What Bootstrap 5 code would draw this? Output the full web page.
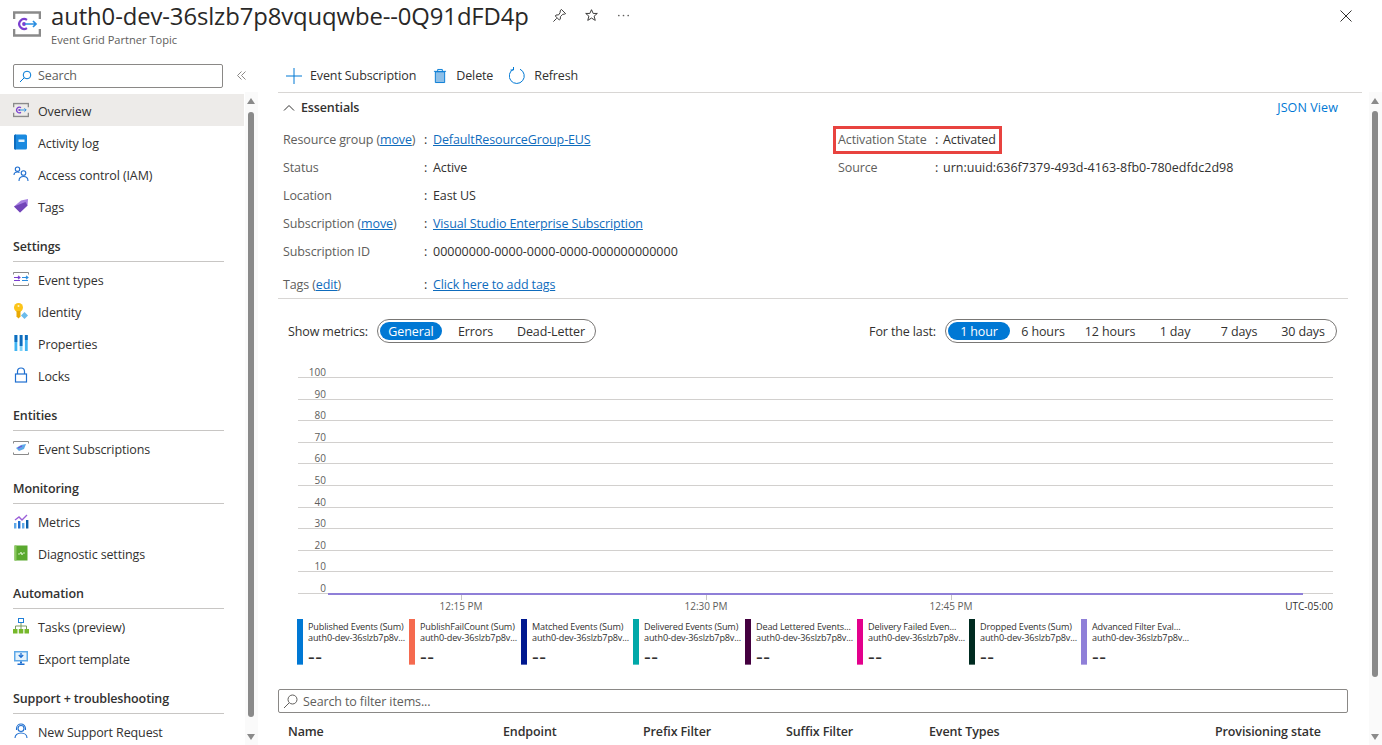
<!DOCTYPE html>
<html lang="en">
<head>
  <meta charset="UTF-8" />
  <meta name="viewport" content="width=device-width, initial-scale=1.0"/>
  <title>Event Grid Partner Topic</title>
  <link href="https://cdn.jsdelivr.net/npm/bootstrap@5.3.2/dist/css/bootstrap.min.css" rel="stylesheet" />
  <style>
    html, body { height: 745px; overflow: hidden; }
    body {
      background: #fff;
      color: #323130;
      font-family: "Open Sans", "Noto Sans", sans-serif;
      font-size: 12.5px;
      letter-spacing: -.12px;
      line-height: 16px;
    }
    a { color: #0f6cbd; }
    .page-head { height: 64px; padding: 0 0 0 13px; }
    .head-icon { width: 28px; height: 26px; margin-top: 11px; margin-right: 10px; }
    .page-title { font-size: 23.85px; line-height: 30px; margin: 0; padding-top: 1px; font-weight: 400; letter-spacing: -.1px; color: #292827; }
    .page-sub { font-size: 11.1px; line-height: 14px; color: #605e5c; margin-top: 2px; letter-spacing: 0; }
    .head-tools { gap: 17px; margin-left: 23px; margin-top: 8px; }
    .head-close { position: absolute; top: 9px; right: 29px; }
    .side-col { width: 260px; height: 681px; position: relative; flex: none; }
    .side-search { width: 210px; height: 24px; margin-left: 13px; border: 1px solid #8a8886; border-radius: 2px; padding-left: 5px; color: #605e5c; gap: 6px; }
    .collapse-mark { position: absolute; left: 236px; top: 6px; }
    .side-list { margin-top: 6px; width: 244px; }
    .side-row { height: 32px; padding-left: 13px; gap: 10px; color: #323130; padding-top: 4px; }
    .side-row.is-active { background: #edebe9; }
    .side-row svg { width: 16px; height: 16px; flex: none; margin-right: -1px; margin-top: -4px; }
    .side-head { height: 40px; margin: 0 20px 1px 13px; border-bottom: 1px solid #c8c6c4; font-weight: 600; padding-top: 17px; line-height: 16px; color: #323130; }
    .bar-track { position: absolute; width: 6px; }
    .side-bar { left: 248px; top: 0; height: 681px; }
    .page-bar { left: 1112px; top: 0; height: 681px; }
    .bar-track::before { content: ""; position: absolute; top: 28px; bottom: 0; left: -3px; right: -4px; background: #fafafa; }
    .bar-thumb { position: absolute; left: 0; right: 0; background: #8a8a8a; border-radius: 3px; }
    .bar-up, .bar-down { position: absolute; left: -1px; width: 0; height: 0; border-left: 4px solid transparent; border-right: 4px solid transparent; }
    .bar-up { border-bottom: 6px solid #8a8a8a; }
    .bar-down { border-top: 6px solid #8a8a8a; }
    .main-col { width: 1122px; flex: none; padding-left: 18px; position: relative; }
    .tool-strip { height: 29px; width: 1084px; border-bottom: 1px solid #d8d6d4; padding: 0 0 5px 8px; }
    .tool-btn { color: #323130; flex: none; }
    .tool-add { gap: 8px; margin-right: 17px; }
    .tool-del { gap: 9px; margin-right: 16px; }
    .tool-ref { gap: 8px; }
    .ess-head { height: 30px; width: 1060px; padding-left: 5px; gap: 6px; font-weight: 600; }
    .ess-head a { font-weight: 400; text-decoration: none; color: #0078d4; letter-spacing: .1px; }
    .ess-grid { width: 1070px; height: 176px; border-bottom: 1px solid #d8d6d4; padding: 3px 0 0 5px; }
    .ess-left { width: 555px; }
    .ess-row { height: 28px; }
    .ess-row.tags-row { margin-top: 5px; }
    .ess-key { width: 141px; color: #605e5c; flex: none; }
    .ess-key.short-key { width: 97px; }
    .ess-colon { width: 9px; flex: none; color: #323130; }
    .ess-colon.short-colon { width: 8px; }
    .id-text { letter-spacing: 0; }
    .state-box { outline: 3px solid #e8433f; height: 22px; margin: 3px 0 3px -2px; padding-left: 2px; width: 163px; }
    .metric-bar { height: 24px; margin: 20px 0 0 10px; width: 1049px; justify-content: space-between; }
    .metric-label { padding-top: 2px; }
    .pill-wrap { height: 24px; border: 1px solid #797775; border-radius: 12px; padding: 2px; margin-left: 9px; color: #323130; }
    .pill-wrap span { display: block; height: 18px; line-height: 20px; border-radius: 9px; text-align: center; flex: none; }
    .pill-wrap .is-on { background: #0078d4; color: #fff; }
    .chart-area { margin-top: 23px; width: 1035px; margin-left: 20px; position: relative; height: 252px; }
    .grid-row { height: 21.6px; border-bottom: 1px solid #d2d0ce; position: relative; }
    .grid-row:first-child { height: 12px; }
    .grid-num { display: block; width: 28px; text-align: right; font-size: 10px; line-height: 10px; position: absolute; bottom: 0; color: #605e5c; letter-spacing: 0; }
    .flat-line { position: absolute; left: 30px; top: 227px; width: 975px; height: 2px; background: #8f7fd8; }
    .tick-mark { position: absolute; top: 229px; width: 1px; height: 5px; background: #c8c6c4; }
    .tick-label { position: absolute; top: 234px; font-size: 10px; line-height: 12px; color: #605e5c; transform: translateX(-50%); letter-spacing: 0; white-space: nowrap; }
    .zone-label { position: absolute; top: 234px; right: 0; font-size: 10px; line-height: 12px; color: #323130; letter-spacing: 0; }
    .legend-strip { margin: 1px 0 0 19px; height: 46px; }
    .legend-cell { width: 112px; flex: none; display: flex; }
    .legend-swatch { width: 6px; height: 46px; flex: none; border-bottom: 1px solid rgba(255,255,255,.35); }
    .legend-text { width: 105px; padding-left: 5px; font-size: 9.1px; line-height: 11px; letter-spacing: -.14px; padding-top: 2px; color: #323130; white-space: nowrap; }
    .legend-value { font-size: 21px; line-height: 16px; margin-top: 5px; color: #323130; letter-spacing: .6px; }
    .filter-box { width: 1070px; height: 24px; margin-top: 24px; border: 1px solid #8a8886; border-radius: 2px; padding-left: 4px; gap: 5px; color: #605e5c; }
    .filter-box span { padding-top: 2px; }
    .col-heads { position: relative; height: 30px; margin-top: 2px; }
    .col-heads span { position: absolute; top: 9px; font-weight: 600; color: #323130; white-space: nowrap; }
    .col-a { left: 10px; } .col-b { left: 225px; } .col-c { left: 365px; } .col-d { left: 508px; } .col-e { left: 651px; } .col-f { left: 937px; }
  </style>
</head>
<body>
<svg width="0" height="0" class="d-block position-absolute">
  <defs>
    <symbol id="grid-topic" viewBox="0 0 28 26">
      <path d="M1 8V1.500h26V8M1 18v6.500h26V18" fill="none" stroke="#8a8a8a" stroke-width="2.600"/>
      <path d="M14 8.800a5 5 0 1 0 0 8.400" fill="none" stroke="#7b3fd0" stroke-width="2.200"/>
      <circle cx="11" cy="13" r="1.900" fill="#7b3fd0"/>
      <path d="M12 13h11M20 10l3 3-3 3" fill="none" stroke="#2a8ee0" stroke-width="1.700"/>
    </symbol>
  </defs>
</svg>

<div class="page-head d-flex position-relative">
  <svg class="head-icon"><use href="#grid-topic"/></svg>
  <div>
    <div class="d-flex">
      <h1 class="page-title">auth0-dev-36slzb7p8vquqwbe--0Q91dFD4p</h1>
      <div class="head-tools d-flex align-items-start">
        <svg width="15" height="15" viewBox="0 0 16 16" fill="none" stroke="#323130"><path d="M10 1.500l4.500 4.500-1 .5-2 .2-2.500 2.500-.2 2.800-1 .8-4.300-4.300.8-1 2.800-.2L8.600 5l.2-2z"/><path d="M5 11l-3.500 3.500"/></svg>
        <svg width="15" height="15" viewBox="0 0 16 16" fill="none" stroke="#323130"><path d="M8 1.800l1.800 4h4.400l-3.400 2.900 1.200 4.500L8 10.700l-4 2.500 1.200-4.500L1.800 5.800h4.400z"/></svg>
        <svg width="15" height="15" viewBox="0 0 16 16" fill="#605e5c"><circle cx="3" cy="8" r=".9"/><circle cx="8" cy="8" r=".9"/><circle cx="13" cy="8" r=".9"/></svg>
      </div>
    </div>
    <div class="page-sub">Event Grid Partner Topic</div>
  </div>
  <svg class="head-close" width="14" height="14" viewBox="0 0 14 14" stroke="#323130" fill="none"><path d="M1.500 1.500l11 11M12.500 1.500l-11 11"/></svg>
</div>

<div class="d-flex">
  <nav class="side-col">
    <div class="side-search d-flex align-items-center">
      <svg width="13" height="13" viewBox="0 0 13 13" fill="none" stroke="#0078d4"><circle cx="8" cy="5" r="3.800"/><path d="M5.200 7.800L1 12"/></svg>
      <span>Search</span>
    </div>
    <svg class="collapse-mark" width="11" height="11" viewBox="0 0 11 11" fill="none" stroke="#8a8886"><path d="M5.500 1.500L1.500 5.500l4 4M9.500 1.500l-4 4 4 4"/></svg>

    <div class="side-list">
      <a class="side-row is-active d-flex align-items-center text-decoration-none"><svg viewBox="0 0 28 26"><use href="#grid-topic"/></svg>Overview</a>
      <a class="side-row d-flex align-items-center text-decoration-none"><svg viewBox="0 0 16 16"><rect x="1" y=".5" width="13" height="15" rx="1.500" fill="#1a8ae0"/><path d="M1 2v12a1.500 1.500 0 0 0 1.500 1.500H3V.5h-.5A1.500 1.500 0 0 0 1 2z" fill="#0f6cbd"/><rect x="5.500" y="5.500" width="6" height="2.500" fill="#e2f2fd"/></svg>Activity log</a>
      <a class="side-row d-flex align-items-center text-decoration-none"><svg viewBox="0 0 16 16" fill="none" stroke="#1f6fd0" stroke-width="1.100"><circle cx="4.500" cy="3.200" r="2.200"/><path d="M1 9c0-2 1.500-3 3.500-3 .8 0 1.500.2 2 .5"/><circle cx="10.500" cy="7" r="2.300"/><path d="M6 15c0-2.800 2-4.500 4.500-4.500S15 12.200 15 15"/></svg>Access control (IAM)</a>
      <a class="side-row d-flex align-items-center text-decoration-none"><svg viewBox="0 0 16 16"><path d="M1 8.500L8 2.500l7-1.500-.5 6.500L7 14.500z" fill="#a67fe0"/><path d="M1 8.500L7 14.500l7.500-7-2-3.500z" fill="#7245b8"/></svg>Tags</a>

      <div class="side-head">Settings</div>
      <a class="side-row d-flex align-items-center text-decoration-none"><svg viewBox="0 0 16 16" fill="none"><path d="M.5 3.500V1.500h15v2M.5 12.500v2h15v-2" stroke="#8a8a8a"/><path d="M1 6.500h6M5 4.800l2 1.700-2 1.700M1 9.500h6" stroke="#7b3fd0" stroke-width="1.100"/><path d="M9 6.500h6M13 4.800l2 1.700-2 1.700M9 9.500h6" stroke="#2a8ee0" stroke-width="1.100"/></svg>Event types</a>
      <a class="side-row d-flex align-items-center text-decoration-none"><svg viewBox="0 0 16 16"><circle cx="5.500" cy="4.500" r="4.500" fill="#fcc419"/><path d="M3.500 8h4v5.500l-2 2-2-2z" fill="#e8a905"/><path d="M11.500 9l3.500 3.500-3.500 3.500L8 12.500z" fill="#6cbcec"/><circle cx="5.500" cy="3" r="1" fill="#fff3bf"/></svg>Identity</a>
      <a class="side-row d-flex align-items-center text-decoration-none"><svg viewBox="0 0 16 16"><rect x="1.500" y="0" width="2.800" height="16" fill="#3fb4f2"/><rect x="6.700" y="0" width="2.800" height="16" fill="#7fd3f7"/><rect x="11.900" y="0" width="2.800" height="16" fill="#3fb4f2"/><rect x="1.500" y="0" width="2.800" height="7" fill="#0f6cbd"/><rect x="6.700" y="0" width="2.800" height="11" fill="#0f6cbd"/><rect x="11.900" y="0" width="2.800" height="5" fill="#0f6cbd"/></svg>Properties</a>
      <a class="side-row d-flex align-items-center text-decoration-none"><svg viewBox="0 0 16 16" fill="none" stroke="#1f6fd0" stroke-width="1.200"><rect x="2.500" y="7" width="11" height="8"/><path d="M4.500 7V4.500a3.500 3.500 0 0 1 7 0V7"/></svg>Locks</a>

      <div class="side-head">Entities</div>
      <a class="side-row d-flex align-items-center text-decoration-none"><svg viewBox="0 0 16 16" fill="none"><path d="M.5 3.500V1.500h15v2M.5 12.500v2h15v-2" stroke="#8a8a8a"/><path d="M3 8l5-3 5-1-2 5-5 2z" fill="#5ea8e8"/><path d="M5 8l4-2" stroke="#7b3fd0"/></svg>Event Subscriptions</a>

      <div class="side-head">Monitoring</div>
      <a class="side-row d-flex align-items-center text-decoration-none"><svg viewBox="0 0 16 16"><rect x="1" y="10" width="2.400" height="5.500" fill="#5ea8e8"/><rect x="5" y="8" width="2.400" height="7.500" fill="#1f6fd0"/><rect x="9" y="10" width="2.400" height="5.500" fill="#5ea8e8"/><rect x="13" y="7" width="2.400" height="8.500" fill="#0a5ea8"/><path d="M2 7l4-3 3 3 5-5" fill="none" stroke="#9a5fd8" stroke-width="1.400"/></svg>Metrics</a>
      <a class="side-row d-flex align-items-center text-decoration-none"><svg viewBox="0 0 16 16"><rect x="1.500" y=".5" width="13" height="15" fill="#5aa92f"/><rect x="1.500" y=".5" width="2" height="15" fill="#8cc860"/><path d="M5 9h2l1-2 1 3 1-2h2" fill="none" stroke="#d8f0c8" stroke-width=".9"/></svg>Diagnostic settings</a>

      <div class="side-head">Automation</div>
      <a class="side-row d-flex align-items-center text-decoration-none"><svg viewBox="0 0 16 16" fill="none"><rect x="5.500" y=".5" width="5" height="4" stroke="#1f7fd8"/><path d="M8 5v6M2.500 11V8h11v3" stroke="#7a9a60"/><rect x="0" y="11" width="4.500" height="4.500" fill="#76b82a"/><rect x="5.800" y="11" width="4.500" height="4.500" fill="#76b82a"/><rect x="11.500" y="11" width="4.500" height="4.500" fill="#76b82a"/></svg>Tasks (preview)</a>
      <a class="side-row d-flex align-items-center text-decoration-none"><svg viewBox="0 0 16 16"><rect x="1" y="1" width="14" height="10.500" fill="#5ea8e8"/><rect x="2.500" y="2.500" width="11" height="7.500" fill="#e6f3fc"/><path d="M8 3v4M5.800 5L8 7.400 10.200 5" fill="none" stroke="#1f6fd0" stroke-width="1.300"/><rect x="7" y="11.500" width="2" height="2" fill="#1f6fd0"/><rect x="4.500" y="13.500" width="7" height="1.500" fill="#1f6fd0"/></svg>Export template</a>

      <div class="side-head">Support + troubleshooting</div>
      <a class="side-row d-flex align-items-center text-decoration-none"><svg viewBox="0 0 16 16" fill="none" stroke="#1f6fd0" stroke-width="1.100"><circle cx="8" cy="5.500" r="3"/><path d="M3.500 7V5.500a4.500 4.500 0 0 1 9 0V7M2 15c0-3 2.500-5 6-5s6 2 6 5"/></svg>New Support Request</a>
    </div>

    <div class="bar-track side-bar">
      <span class="bar-up" style="top:34px"></span>
      <span class="bar-thumb" style="top:48px;height:605px"></span>
      <span class="bar-down" style="top:670px"></span>
    </div>
  </nav>

  <main class="main-col">
    <div class="tool-strip d-flex align-items-center">
      <div class="tool-btn tool-add d-flex align-items-center"><svg width="16" height="16" viewBox="0 0 16 16" stroke="#0078d4" fill="none"><path d="M8 0v16M0 8h16"/></svg>Event Subscription</div>
      <div class="tool-btn tool-del d-flex align-items-center"><svg width="14" height="16" viewBox="0 0 15 16"><path d="M2.500 3.500h10V15h-10z" fill="#8dbfe8" stroke="#0078d4"/><path d="M1 3h13M5 3V1h5v2" fill="none" stroke="#0078d4"/></svg>Delete</div>
      <div class="tool-btn tool-ref d-flex align-items-center"><svg width="17" height="17" viewBox="0 0 17 17" fill="none" stroke="#0078d4"><path d="M11 2.200A7.500 7.500 0 1 1 4.500 2.200"/><path d="M4.500 0v3H1.500"/></svg>Refresh</div>
    </div>

    <div class="ess-head d-flex align-items-center">
      <svg width="12" height="12" viewBox="0 0 12 12" fill="none" stroke="#323130"><path d="M1 8.500l5-5 5 5"/></svg>
      <span>Essentials</span>
      <a class="ms-auto" href="#">JSON View</a>
    </div>

    <div class="ess-grid d-flex">
      <div class="ess-left">
        <div class="ess-row d-flex align-items-center"><span class="ess-key">Resource group (<a href="#">move</a>)</span><span class="ess-colon">:</span><a href="#">DefaultResourceGroup-EUS</a></div>
        <div class="ess-row d-flex align-items-center"><span class="ess-key">Status</span><span class="ess-colon">:</span>Active</div>
        <div class="ess-row d-flex align-items-center"><span class="ess-key">Location</span><span class="ess-colon">:</span>East US</div>
        <div class="ess-row d-flex align-items-center"><span class="ess-key">Subscription (<a href="#">move</a>)</span><span class="ess-colon">:</span><a href="#">Visual Studio Enterprise Subscription</a></div>
        <div class="ess-row d-flex align-items-center"><span class="ess-key">Subscription ID</span><span class="ess-colon">:</span><span class="id-text">00000000-0000-0000-0000-000000000000</span></div>
        <div class="ess-row tags-row d-flex align-items-center"><span class="ess-key">Tags (<a href="#">edit</a>)</span><span class="ess-colon">:</span><a href="#">Click here to add tags</a></div>
      </div>
      <div>
        <div class="state-box d-flex align-items-center"><span class="ess-key short-key">Activation State</span><span class="ess-colon short-colon">:</span>Activated</div>
        <div class="ess-row d-flex align-items-center"><span class="ess-key short-key">Source</span><span class="ess-colon short-colon">:</span><span class="id-text">urn:uuid:636f7379-493d-4163-8fb0-780edfdc2d98</span></div>
      </div>
    </div>

    <div class="metric-bar d-flex">
      <div class="d-flex align-items-center"><span class="metric-label">Show metrics:</span>
        <div class="pill-wrap d-flex align-items-center">
          <span class="is-on" style="width:62px">General</span><span style="width:67px">Errors</span><span style="width:84px">Dead-Letter</span>
        </div>
      </div>
      <div class="d-flex align-items-center"><span class="metric-label">For the last:</span>
        <div class="pill-wrap d-flex align-items-center">
          <span class="is-on" style="width:62px">1 hour</span><span style="width:66px">6 hours</span><span style="width:68px">12 hours</span><span style="width:62px">1 day</span><span style="width:66px">7 days</span><span style="width:62px">30 days</span>
        </div>
      </div>
    </div>

    <div class="chart-area">
      <div class="grid-row"><span class="grid-num">100</span></div>
      <div class="grid-row"><span class="grid-num">90</span></div>
      <div class="grid-row"><span class="grid-num">80</span></div>
      <div class="grid-row"><span class="grid-num">70</span></div>
      <div class="grid-row"><span class="grid-num">60</span></div>
      <div class="grid-row"><span class="grid-num">50</span></div>
      <div class="grid-row"><span class="grid-num">40</span></div>
      <div class="grid-row"><span class="grid-num">30</span></div>
      <div class="grid-row"><span class="grid-num">20</span></div>
      <div class="grid-row"><span class="grid-num">10</span></div>
      <div class="grid-row"><span class="grid-num">0</span></div>
      <span class="flat-line"></span>
      <span class="tick-mark" style="left:163px"></span><span class="tick-label" style="left:163px">12:15 PM</span>
      <span class="tick-mark" style="left:408px"></span><span class="tick-label" style="left:408px">12:30 PM</span>
      <span class="tick-mark" style="left:653px"></span><span class="tick-label" style="left:653px">12:45 PM</span>
      <span class="zone-label">UTC-05:00</span>
    </div>

    <div class="legend-strip d-flex" id="legendStrip"></div>

    <div class="filter-box d-flex align-items-center">
      <svg width="15" height="15" viewBox="0 0 15 15" fill="none" stroke="#605e5c"><circle cx="9.500" cy="5.500" r="4.500"/><path d="M6 9l-5 5"/></svg>
      <span>Search to filter items...</span>
    </div>

    <div class="col-heads">
      <span class="col-a">Name</span><span class="col-b">Endpoint</span><span class="col-c">Prefix Filter</span><span class="col-d">Suffix Filter</span><span class="col-e">Event Types</span><span class="col-f">Provisioning state</span>
    </div>

    <div class="bar-track page-bar">
      <span class="bar-up" style="top:34px"></span>
      <span class="bar-thumb" style="top:47px;height:566px"></span>
      <span class="bar-down" style="top:670px"></span>
    </div>
  </main>
</div>

<script>
  // Legend entries, in chart order
  const legendItems = [
    { name: "Published Events (Sum)", color: "#0078d4" },
    { name: "PublishFailCount (Sum)", color: "#f56a4f" },
    { name: "Matched Events (Sum)", color: "#00188f" },
    { name: "Delivered Events (Sum)", color: "#00a8a8" },
    { name: "Dead Lettered Events...", color: "#44003f" },
    { name: "Delivery Failed Even...", color: "#e3008c" },
    { name: "Dropped Events (Sum)", color: "#002b20" },
    { name: "Advanced Filter Eval...", color: "#8f7fd8" }
  ];

  document.getElementById("legendStrip").innerHTML = legendItems.map(item => `
    <div class="legend-cell">
      <div class="legend-swatch" style="background:${item.color}"></div>
      <div class="legend-text">${item.name}<br>auth0-dev-36slzb7p8v...<div class="legend-value">--</div></div>
    </div>`).join("");
</script>
<script src="https://cdn.jsdelivr.net/npm/bootstrap@5.3.2/dist/js/bootstrap.bundle.min.js"></script>
</body>
</html>
